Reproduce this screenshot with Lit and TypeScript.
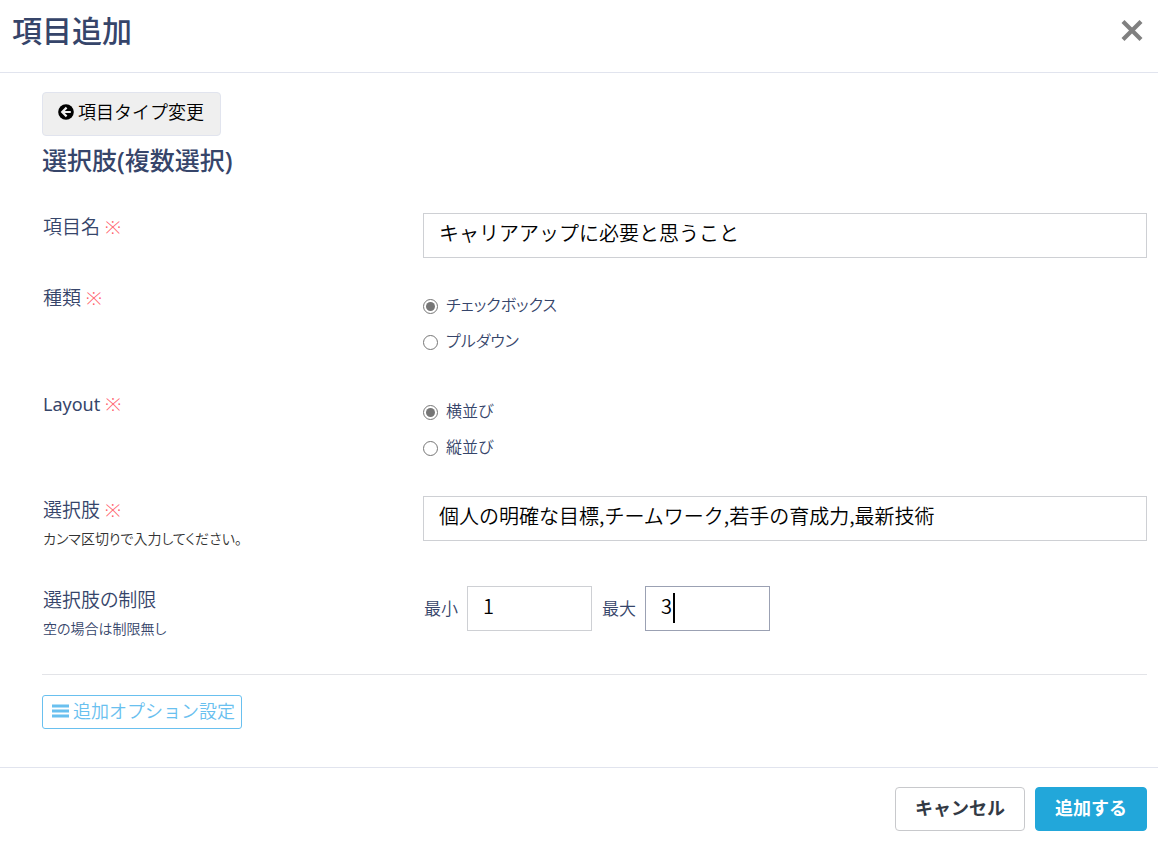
import { LitElement, html, css } from "lit";
import { customElement, state } from "lit/decorators.js";

@customElement("app-root")
export class AppRoot extends LitElement {
  @state() private kind = "checkbox";
  @state() private direction = "horizontal";

  static styles = css`
    :host {
      display: block;
      background: #fff;
      color: #36456a;
      font-family: "Noto Sans", "Noto Sans CJK JP", sans-serif;
      font-size: 18px;
      font-weight: 350;
    }
    * {
      box-sizing: border-box;
    }
    button,
    input {
      font: inherit;
      margin: 0;
    }
    button {
      cursor: pointer;
    }
    .header {
      display: flex;
      align-items: center;
      justify-content: space-between;
      padding: 7px 12px 17px;
      border-bottom: 1px solid #e1e4ee;
    }
    .title {
      margin: 0;
      font-size: 30px;
      line-height: 48px;
      font-weight: 500;
    }
    .close {
      display: flex;
      padding: 0;
      border: 0;
      background: none;
    }
    .body {
      padding: 19px 11px 38px 42px;
    }
    .back {
      display: inline-flex;
      align-items: center;
      gap: 4px;
      height: 44px;
      padding: 0 16px 4px 15px;
      border: 1px solid #e1e4ee;
      border-radius: 4px;
      background: #efefef;
      color: #000;
    }
    .back span,
    .more span {
      padding-bottom: 2px;
    }
    .subtitle {
      margin: 0 0 34px;
      padding: 7px 0 1px;
      font-size: 25px;
      line-height: 35px;
      font-weight: 500;
    }
    .rows {
      display: grid;
      gap: 26px;
    }
    .row {
      display: grid;
      grid-template-columns: 380px 1fr;
      align-items: start;
      padding-left: 1px;
    }
    .name {
      display: flex;
      flex-direction: column;
    }
    .label {
      font-size: 19px;
      line-height: 28px;
      font-feature-settings: "palt";
    }
    .latin {
      font-size: 18px;
      font-weight: 400;
    }
    .mark {
      color: #ff5a68;
      font-weight: 350;
    }
    .help {
      margin-bottom: 6px;
      font-size: 14px;
      line-height: 30px;
      font-feature-settings: "palt";
    }
    .dark {
      color: #333;
    }
    .text {
      width: 100%;
      height: 45px;
      padding: 0 15px 6px;
      border: 1px solid #ced0d4;
      border-radius: 0;
      background: #fff;
      color: #000;
      font-family: "Noto Sans CJK JP", sans-serif;
      font-size: 20px;
      outline: none;
    }
    .options {
      display: flex;
      flex-direction: column;
      padding: 4px 0;
    }
    .option {
      display: flex;
      align-items: center;
      gap: 8px;
      height: 36px;
      font-size: 16px;
      font-feature-settings: "palt";
    }
    .option span {
      padding-bottom: 4px;
    }
    .radio {
      width: 15px;
      height: 15px;
      accent-color: #767676;
    }
    .limits {
      display: flex;
      align-items: center;
      gap: 9px;
      padding-left: 1px;
      font-size: 17px;
    }
    .limits label {
      padding-bottom: 2px;
    }
    .field {
      position: relative;
      width: 125px;
    }
    .field + label {
      margin-left: 1px;
    }
    .active {
      border-color: #9ba1b3;
    }
    .caret {
      position: absolute;
      left: 28px;
      top: 7px;
      width: 2px;
      height: 30px;
      background: #000;
    }
    .rule {
      height: 1px;
      margin: 24px 0 20px;
      border: 0;
      background: #e3e4e8;
    }
    .more {
      display: inline-flex;
      align-items: center;
      gap: 4px;
      height: 34px;
      padding: 0 6px 2px 9px;
      border: 1px solid #69c0ef;
      border-radius: 3px;
      background: #fff;
      color: #69c0ef;
    }
    .footer {
      display: flex;
      justify-content: flex-end;
      gap: 10px;
      padding: 19px 11px 15px;
      border-top: 1px solid #e1e4ee;
    }
    .action {
      height: 44px;
      padding: 0 19px 5px;
      border: 1px solid #c8c9cc;
      border-radius: 4px;
      background: #fff;
      color: #333a45;
      font-weight: 700;
    }
    .primary {
      border-color: #22a7da;
      background: #22a7da;
      color: #fff;
    }
    svg {
      display: block;
      flex: none;
    }
  `;

  private mark() {
    return html`<span class="mark">※</span>`;
  }

  private radio(group: string, value: string, text: string, current: string, pick: (v: string) => void) {
    return html`<label class="option">
      <input class="radio" type="radio" name=${group} value=${value}
        .checked=${current === value} @change=${() => pick(value)} />
      <span>${text}</span>
    </label>`;
  }

  render() {
    return html`
      <header class="header">
        <h1 class="title">項目追加</h1>
        <button class="close" type="button" aria-label="閉じる">
          <svg width="28" height="28" viewBox="0 0 28 28">
            <path d="M5 4.5 23 22.5M23 4.5 5 22.5" stroke="#808080" stroke-width="4.2" fill="none" />
          </svg>
        </button>
      </header>
      <main class="body">
        <button class="back" type="button">
          <svg width="16" height="16" viewBox="0 0 16 16">
            <circle cx="8" cy="8" r="7.8" fill="#000" />
            <path d="M8.6 3.6 4.2 8l4.4 4.4M4.6 8H12.8" stroke="#efefef" stroke-width="2.2" fill="none" />
          </svg>
          <span>項目タイプ変更</span>
        </button>
        <h2 class="subtitle">選択肢(複数選択)</h2>
        <div class="rows">
          <div class="row">
            <div class="name"><label class="label" for="name">項目名 ${this.mark()}</label></div>
            <input class="text" id="name" type="text" value="キャリアアップに必要と思うこと" />
          </div>
          <div class="row" role="radiogroup" aria-labelledby="kind">
            <div class="name"><span class="label" id="kind">種類 ${this.mark()}</span></div>
            <div class="options">
              ${this.radio("kind", "checkbox", "チェックボックス", this.kind, (v) => (this.kind = v))}
              ${this.radio("kind", "pulldown", "プルダウン", this.kind, (v) => (this.kind = v))}
            </div>
          </div>
          <div class="row" role="radiogroup" aria-labelledby="direction">
            <div class="name">
              <span class="label" id="direction"><span class="latin">Layout</span> ${this.mark()}</span>
            </div>
            <div class="options">
              ${this.radio("direction", "horizontal", "横並び", this.direction, (v) => (this.direction = v))}
              ${this.radio("direction", "vertical", "縦並び", this.direction, (v) => (this.direction = v))}
            </div>
          </div>
          <div class="row">
            <div class="name">
              <label class="label" for="choices">選択肢 ${this.mark()}</label>
              <span class="help dark">カンマ区切りで入力してください。</span>
            </div>
            <input class="text" id="choices" type="text"
              value="個人の明確な目標,チームワーク,若手の育成力,最新技術" />
          </div>
          <div class="row">
            <div class="name">
              <span class="label">選択肢の制限</span>
              <span class="help">空の場合は制限無し</span>
            </div>
            <div class="limits">
              <label for="min">最小</label>
              <div class="field"><input class="text" id="min" type="text" value="1" /></div>
              <label for="max">最大</label>
              <div class="field">
                <input class="text active" id="max" type="text" value="3" />
                <span class="caret"></span>
              </div>
            </div>
          </div>
        </div>
        <hr class="rule" />
        <button class="more" type="button">
          <svg width="17" height="14" viewBox="0 0 17 14">
            <path d="M0 2h17M0 7h17M0 12h17" stroke="#69c0ef" stroke-width="3" />
          </svg>
          <span>追加オプション設定</span>
        </button>
      </main>
      <footer class="footer">
        <button class="action" type="button">キャンセル</button>
        <button class="action primary" type="button">追加する</button>
      </footer>
    `;
  }
}
